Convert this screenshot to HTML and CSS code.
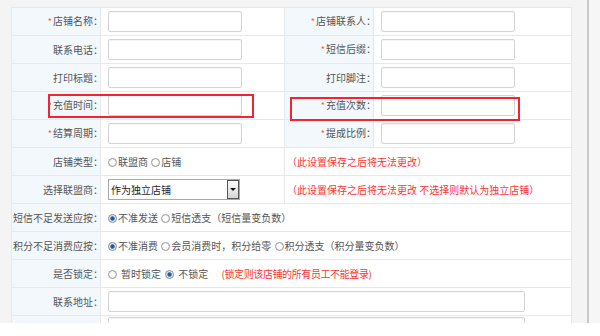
FILE: index.html
```html
<!DOCTYPE html>
<html lang="zh-CN">
<head>
    <meta charset="UTF-8">
    <meta name="viewport" content="width=device-width, initial-scale=1.0">
    <title>店铺设置</title>
    <link rel="stylesheet" href="styles.css">
</head>
<body>
    <div class="screen">
        <div class="main">
            <table class="form">
                <colgroup>
                    <col class="c-lbl">
                    <col class="c-val">
                    <col class="c-lbl">
                    <col class="c-val2">
                </colgroup>
                <tr>
                    <td class="lbl"><span><i>*</i>店铺名称：</span></td>
                    <td><input type="text" class="txt"></td>
                    <td class="lbl"><span><i>*</i>店铺联系人：</span></td>
                    <td><input type="text" class="txt"></td>
                </tr>
                <tr>
                    <td class="lbl"><span>联系电话：</span></td>
                    <td><input type="text" class="txt"></td>
                    <td class="lbl"><span><i>*</i>短信后缀：</span></td>
                    <td><input type="text" class="txt"></td>
                </tr>
                <tr>
                    <td class="lbl"><span>打印标题：</span></td>
                    <td><input type="text" class="txt"></td>
                    <td class="lbl"><span>打印脚注：</span></td>
                    <td><input type="text" class="txt"></td>
                </tr>
                <tr>
                    <td class="lbl"><span><i>*</i>充值时间：</span></td>
                    <td><input type="text" class="txt"></td>
                    <td class="lbl"><span><i>*</i>充值次数：</span></td>
                    <td><input type="text" class="txt"></td>
                </tr>
                <tr>
                    <td class="lbl"><span><i>*</i>结算周期：</span></td>
                    <td><input type="text" class="txt"></td>
                    <td class="lbl"><span><i>*</i>提成比例：</span></td>
                    <td><input type="text" class="txt"></td>
                </tr>
                <tr>
                    <td class="lbl"><span>店铺类型：</span></td>
                    <td>
                        <label><input type="radio" name="shopType">联盟商</label>
                        <label><input type="radio" name="shopType">店铺</label>
                    </td>
                    <td colspan="2" class="note">（此设置保存之后将无法更改）</td>
                </tr>
                <tr>
                    <td class="lbl"><span>选择联盟商：</span></td>
                    <td>
                        <span class="sel">
                            <select>
                                <option>作为独立店铺</option>
                            </select>
                            <span class="sel-btn"></span>
                        </span>
                    </td>
                    <td colspan="2" class="note">（此设置保存之后将无法更改 不选择则默认为独立店铺）</td>
                </tr>
                <tr>
                    <td class="lbl"><span>短信不足发送应按：</span></td>
                    <td colspan="3">
                        <label><input type="radio" name="sms" checked>不准发送</label>
                        <label><input type="radio" name="sms">短信透支（短信量变负数）</label>
                    </td>
                </tr>
                <tr>
                    <td class="lbl"><span>积分不足消费应按：</span></td>
                    <td colspan="3">
                        <label><input type="radio" name="points" checked>不准消费</label>
                        <label><input type="radio" name="points">会员消费时，积分给零</label>
                        <label><input type="radio" name="points">积分透支（积分量变负数）</label>
                    </td>
                </tr>
                <tr>
                    <td class="lbl"><span>是否锁定：</span></td>
                    <td colspan="3">
                        <label class="spaced"><input type="radio" name="lock">暂时锁定</label>
                        <label class="spaced"><input type="radio" name="lock" checked>不锁定</label>
                        <span class="warn">(锁定则该店铺的所有员工不能登录)</span>
                    </td>
                </tr>
                <tr>
                    <td class="lbl"><span>联系地址：</span></td>
                    <td colspan="3"><input type="text" class="txt wide"></td>
                </tr>
                <tr class="last">
                    <td class="lbl"></td>
                    <td colspan="3"><textarea class="txt wide area"></textarea></td>
                </tr>
            </table>

            <!-- highlight boxes drawn over the form -->
            <div class="mark mark-a"></div>
            <div class="mark mark-b"></div>
        </div>
        <div class="rail"></div>
        <div class="side"></div>
    </div>
</body>
</html>
```

FILE: styles.css
```css
body {
    margin: 0;
    background-color: #fff;
    font-family: "Noto Sans CJK SC", sans-serif;
    font-size: 10px;
    color: #555;
}

.screen {
    display: flex;
    height: 323px;
    overflow: hidden;
    background-color: #f4f4f4;
}

.main {
    position: relative;
    flex: 0 0 586px;
    box-sizing: border-box;
    padding: 7px 15px 0 11px;
}

.rail {
    flex: 0 0 2px;
    background-color: #c9c9c9;
}

.side {
    flex: 1;
    background-color: #f6f6f6;
}

.form {
    width: 560px;
    table-layout: fixed;
    border-collapse: collapse;
    background-color: #fff;
}

.c-lbl {
    width: 89px;
}

.c-val {
    width: 184px;
}

.c-val2 {
    width: 198px;
}

.form tr {
    height: 28px;
}

.form td {
    border: 1px solid #e8e8e8;
    padding: 0 7px;
    white-space: nowrap;
    vertical-align: middle;
    line-height: 14px;
}

.form td.lbl {
    background-color: #f3f8fd;
    text-align: right;
    padding: 0;
}

.lbl span {
    margin-right: -3px;
}

.lbl i {
    font-style: normal;
    color: #f5602a;
    font-size: 9px;
    margin-right: 1px;
}

.form td.note {
    padding-left: 2px;
    color: #f33;
}

.warn {
    color: #f33;
    margin-left: 9px;
    letter-spacing: -0.4px;
}

.txt {
    display: block;
    box-sizing: border-box;
    width: 134px;
    height: 21px;
    margin: 0;
    border: 1px solid #d4d4d4;
    border-radius: 2px;
    box-shadow: inset 0 1px 1px rgba(0, 0, 0, 0.04);
    background-color: #fff;
    font: inherit;
}

.wide {
    width: 417px;
}

.area {
    height: 30px;
    resize: none;
    margin-top: 1px;
}

.last td {
    vertical-align: top;
}

label {
    margin-right: 1px;
}

label.spaced input {
    margin-right: 4px;
}

label.spaced {
    margin-right: 2px;
}

input[type="radio"] {
    appearance: none;
    -webkit-appearance: none;
    box-sizing: border-box;
    width: 9px;
    height: 9px;
    margin: 0 1px 0 0;
    border: 1px solid #9a9a9a;
    border-radius: 50%;
    background: radial-gradient(circle, #fff 0, #fff 40%, #dedede 100%);
    vertical-align: -1px;
}

input[type="radio"]:checked {
    border-color: #7d8c9c;
    background: radial-gradient(circle, #1f4f8f 0, #2b62a8 1.8px, #e6e6e6 2.6px, #fff 100%);
}

.sel {
    position: relative;
    display: inline-block;
    vertical-align: middle;
}

.sel select {
    appearance: none;
    -webkit-appearance: none;
    box-sizing: border-box;
    width: 132px;
    height: 21px;
    margin: 0;
    padding: 0 0 0 2px;
    border: 1px solid #a8a8a8;
    border-radius: 0;
    background-color: #fff;
    font: inherit;
    color: #1e1e1e;
}

.sel-btn {
    position: absolute;
    top: 1px;
    right: 1px;
    box-sizing: border-box;
    width: 12px;
    height: 19px;
    border: 1px solid #555;
    background: linear-gradient(#fdfdfd, #d6d6d6);
}

.sel-btn::after {
    content: "";
    position: absolute;
    left: 2px;
    top: 7px;
    border-left: 3px solid transparent;
    border-right: 3px solid transparent;
    border-top: 3px solid #111;
}

.mark {
    position: absolute;
    box-sizing: border-box;
    height: 24px;
    border: 2px solid #f3242f;
}

.mark-a {
    left: 48px;
    top: 94px;
    width: 206px;
}

.mark-b {
    left: 290px;
    top: 97px;
    width: 230px;
}
```
